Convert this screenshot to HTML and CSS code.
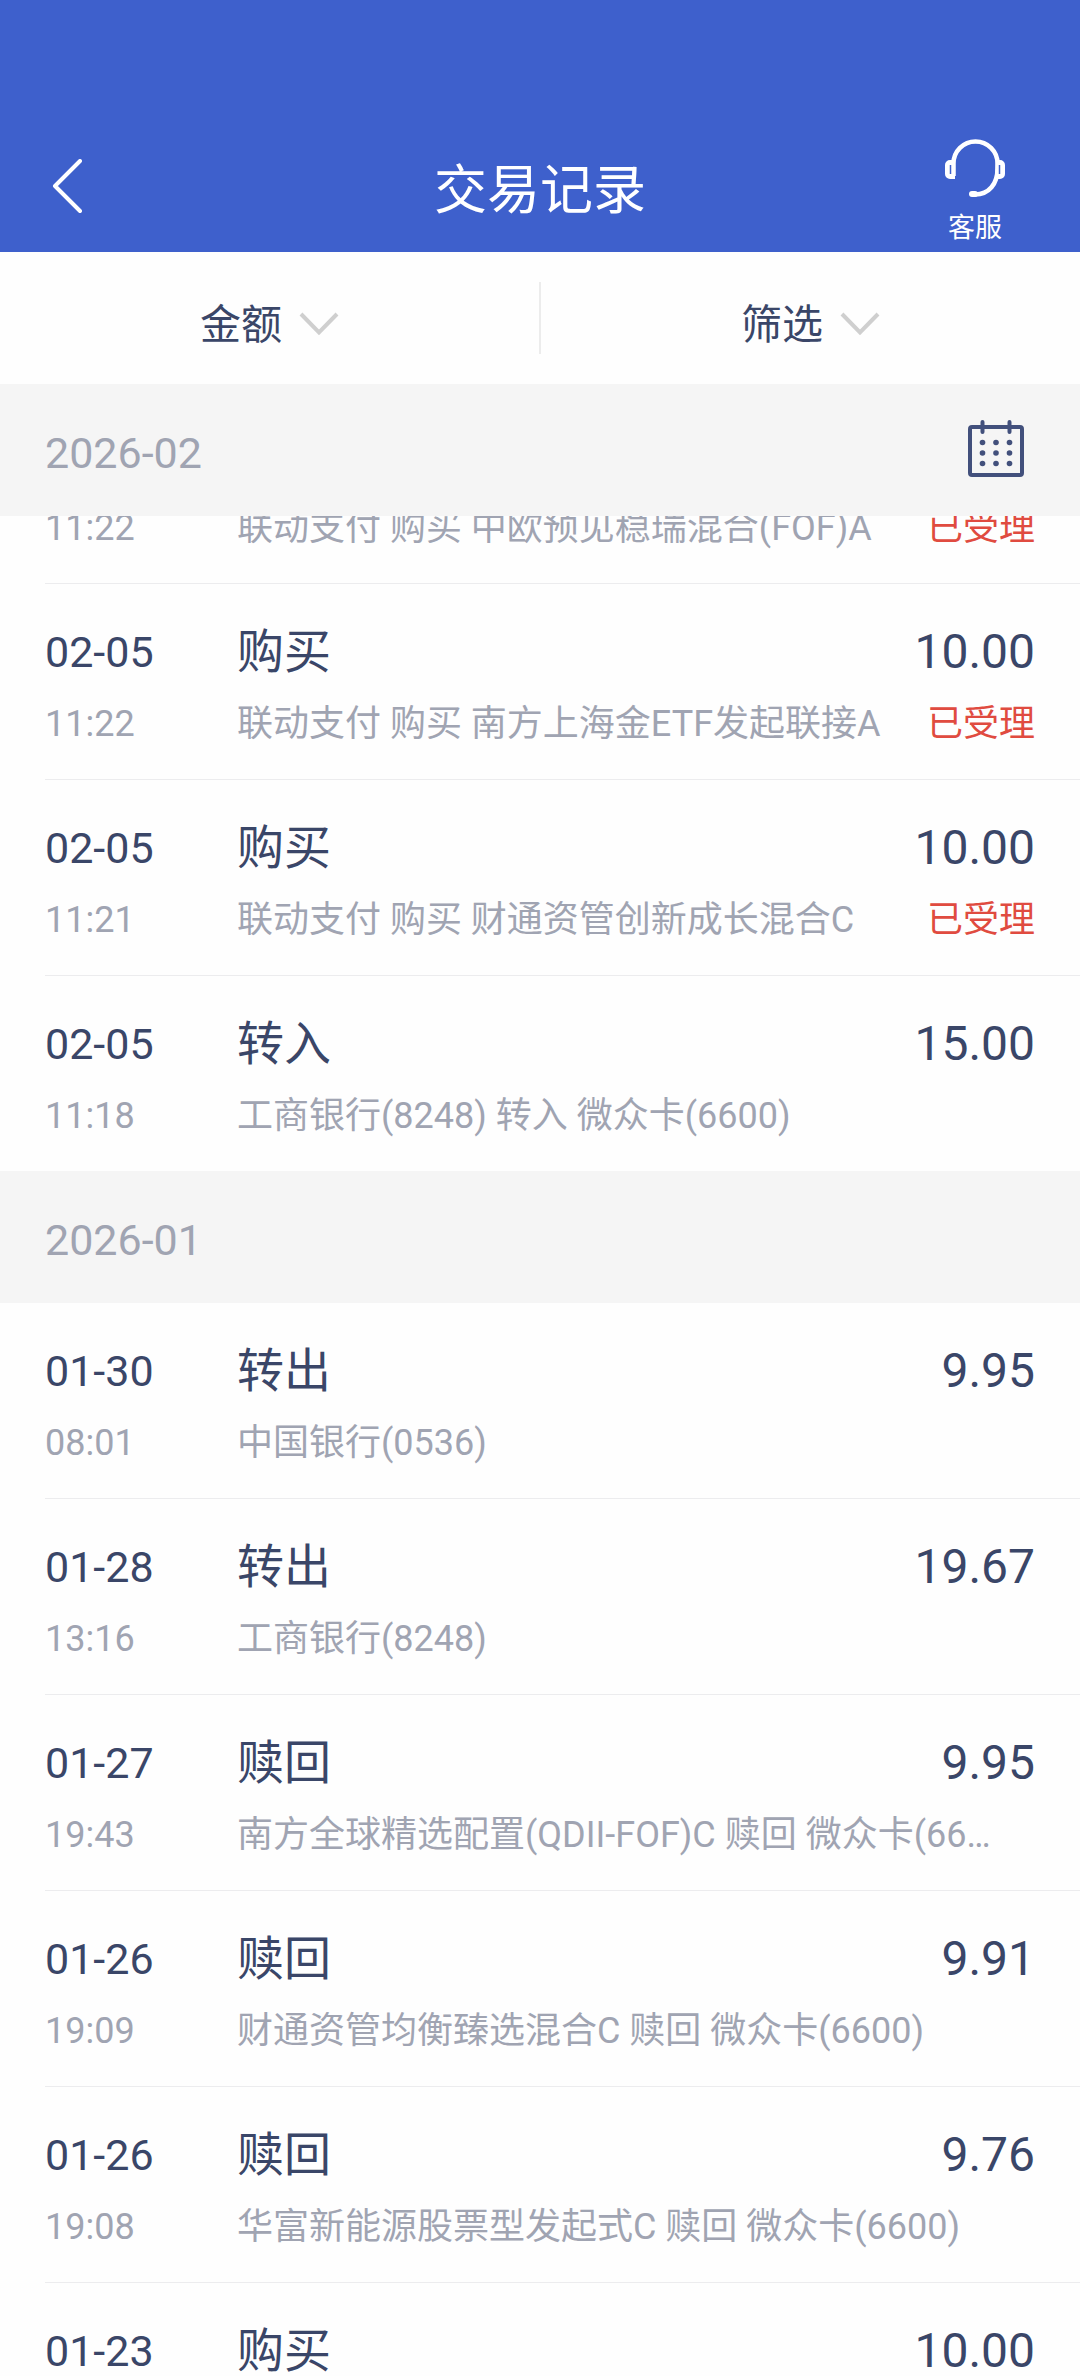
FILE: index.html
```html
<!DOCTYPE html>
<html lang="zh-CN">
<head>
<meta charset="utf-8">
<meta name="viewport" content="width=device-width, initial-scale=1">
<title>交易记录</title>
<link rel="stylesheet" href="styles.css">
</head>
<body>
<div class="app">
  <header class="header">
    <button class="back" type="button" aria-label="返回">
      <svg width="48" height="64" viewBox="0 0 48 64" fill="none" stroke="currentColor" stroke-width="4" stroke-linecap="round" stroke-linejoin="round"><path d="M35 2 10 27 35 52"/></svg>
    </button>
    <h1 class="title">交易记录</h1>
    <button class="service" type="button">
      <svg width="60" height="60" viewBox="0 0 60 60" fill="none"><g stroke="currentColor" stroke-width="4.500"><path d="M8.500 38V25.500a22 22 0 0 1 44 0v5C52.500 46 44 56.500 30 56.500"/><path d="M27 56h3" stroke-width="6" stroke-linecap="round"/></g><path d="M10 22H5a5 5 0 0 0-5 5v9a5 5 0 0 0 5 5h5zM51 22h4a5 5 0 0 1 5 5v9a5 5 0 0 1-5 5h-5z" fill="currentColor"/><path d="M5.500 27v9M54.500 27v9" stroke="#3e60cc" stroke-width="1.500"/></svg>
      <span>客服</span>
    </button>
  </header>

  <nav class="filters">
    <button class="filter" type="button">金额
      <svg width="40" height="26" viewBox="0 0 40 26" fill="none" stroke="#cfcfcf" stroke-width="4"><path d="M2 2 20 20.500 38 2"/></svg>
    </button>
    <button class="filter" type="button">筛选
      <svg width="40" height="26" viewBox="0 0 40 26" fill="none" stroke="#cfcfcf" stroke-width="4"><path d="M2 2 20 20.500 38 2"/></svg>
    </button>
  </nav>

  <main class="records">
    <section>
      <div class="month">
        <h2>2026-02</h2>
        <button class="calendar" type="button" aria-label="选择月份">
          <svg width="56" height="66" viewBox="0 0 56 66" fill="none" stroke="currentColor" stroke-width="4"><rect x="2" y="7" width="52" height="48" rx="2"/><path d="M14.500 2v10M41.500 2v10" stroke-linecap="round"/><g fill="currentColor" stroke="none"><circle cx="14.500" cy="22.500" r="2.800"/><circle cx="28" cy="22.500" r="2.800"/><circle cx="41.500" cy="22.500" r="2.800"/><circle cx="14.500" cy="33" r="2.800"/><circle cx="28" cy="33" r="2.800"/><circle cx="41.500" cy="33" r="2.800"/><circle cx="14.500" cy="43.500" r="2.800"/><circle cx="28" cy="43.500" r="2.800"/><circle cx="41.500" cy="43.500" r="2.800"/></g></svg>
        </button>
      </div>
      <ul class="list">
        <li class="row row-clipped">
          <div class="sub"><time>11:22</time><span class="desc">联动支付 购买 中欧预见稳瑞混合(FOF)A</span><span class="status">已受理</span></div>
        </li>
        <li class="row">
          <div class="main"><time>02-05</time><span class="kind">购买</span><span class="amount">10.00</span></div>
          <div class="sub"><time>11:22</time><span class="desc">联动支付 购买 南方上海金ETF发起联接A</span><span class="status">已受理</span></div>
        </li>
        <li class="row">
          <div class="main"><time>02-05</time><span class="kind">购买</span><span class="amount">10.00</span></div>
          <div class="sub"><time>11:21</time><span class="desc">联动支付 购买 财通资管创新成长混合C</span><span class="status">已受理</span></div>
        </li>
        <li class="row">
          <div class="main"><time>02-05</time><span class="kind">转入</span><span class="amount">15.00</span></div>
          <div class="sub"><time>11:18</time><span class="desc">工商银行(8248) 转入 微众卡(6600)</span></div>
        </li>
      </ul>
    </section>
    <section>
      <div class="month"><h2>2026-01</h2></div>
      <ul class="list">
        <li class="row">
          <div class="main"><time>01-30</time><span class="kind">转出</span><span class="amount">9.95</span></div>
          <div class="sub"><time>08:01</time><span class="desc">中国银行(0536)</span></div>
        </li>
        <li class="row">
          <div class="main"><time>01-28</time><span class="kind">转出</span><span class="amount">19.67</span></div>
          <div class="sub"><time>13:16</time><span class="desc">工商银行(8248)</span></div>
        </li>
        <li class="row">
          <div class="main"><time>01-27</time><span class="kind">赎回</span><span class="amount">9.95</span></div>
          <div class="sub"><time>19:43</time><span class="desc">南方全球精选配置(QDII-FOF)C 赎回 微众卡(6600)</span></div>
        </li>
        <li class="row">
          <div class="main"><time>01-26</time><span class="kind">赎回</span><span class="amount">9.91</span></div>
          <div class="sub"><time>19:09</time><span class="desc">财通资管均衡臻选混合C 赎回 微众卡(6600)</span></div>
        </li>
        <li class="row">
          <div class="main"><time>01-26</time><span class="kind">赎回</span><span class="amount">9.76</span></div>
          <div class="sub"><time>19:08</time><span class="desc">华富新能源股票型发起式C 赎回 微众卡(6600)</span></div>
        </li>
        <li class="row">
          <div class="main"><time>01-23</time><span class="kind">购买</span><span class="amount">10.00</span></div>
        </li>
      </ul>
    </section>
  </main>
</div>
</body>
</html>
```
FILE: styles.css
```css
* {
  box-sizing: border-box;
  margin: 0;
  padding: 0;
}

body {
  background: #fefefe;
  color: #3a4668;
  font-family: Roboto, "Noto Sans CJK SC", sans-serif;
}

button {
  border: 0;
  background: none;
  color: inherit;
  font: inherit;
  cursor: pointer;
}

svg {
  display: block;
  flex: none;
}

h1,
h2 {
  font-weight: 400;
}

.app {
  display: flex;
  flex-direction: column;
  height: 100vh;
  overflow: hidden;
}

/* Title bar, with room for the system status bar above it */
.header {
  display: grid;
  grid-template-columns: 1fr auto 1fr;
  align-items: center;
  flex: none;
  height: 252px;
  padding: 130px 45px 0;
  background: #3e60cc;
  color: #fff;
}

.back {
  justify-self: start;
}

.title {
  font-size: 53px;
  line-height: 72px;
}

.service {
  display: flex;
  flex-direction: column;
  align-items: center;
  justify-self: end;
  gap: 14px;
  margin-right: 30px;
  font-size: 27px;
  line-height: 32px;
}

.filters {
  display: flex;
  flex: none;
  height: 132px;
  padding: 30px 0;
}

.filter {
  display: flex;
  flex: 1;
  align-items: center;
  justify-content: center;
  gap: 17px;
  padding-top: 14px;
  font-size: 41px;
  line-height: 58px;
}

.filter + .filter {
  border-left: 2px solid #ececec;
}

.records {
  flex: 1;
  min-height: 0;
  overflow: hidden;
}

.month {
  display: flex;
  align-items: center;
  justify-content: space-between;
  height: 132px;
  padding: 6px 56px 0 45px;
  background: #f5f5f5;
}

.month h2 {
  color: #a0a4b2;
  font-size: 43px;
  line-height: 60px;
}

.calendar {
  color: #42507c;
}

.list {
  padding-left: 45px;
  list-style: none;
}

.row {
  display: flex;
  flex-direction: column;
  gap: 8px;
  padding: 32px 45px 27px 0;
  border-bottom: 1px solid #ececee;
}

.row:last-child {
  border-bottom: 0;
}

/* Row scrolled partly under the month bar */
.row-clipped {
  height: 68px;
  padding-top: 0;
  justify-content: flex-end;
  overflow: hidden;
}

.main,
.sub {
  display: flex;
  align-items: center;
}

.main {
  font-size: 48px;
  line-height: 72px;
}

.sub {
  gap: 32px;
  color: #a0a4b2;
  font-size: 36px;
  line-height: 56px;
}

.main time {
  flex: none;
  width: 192px;
  font-size: 43px;
}

.sub time {
  flex: none;
  width: 160px;
}

.kind {
  flex: 1;
  font-size: 47px;
}

.desc {
  flex: 1;
  min-width: 0;
  margin-right: 32px;
  overflow: hidden;
  text-overflow: ellipsis;
  white-space: nowrap;
}

.status {
  margin-left: -32px;
  color: #e04b40;
}
```
